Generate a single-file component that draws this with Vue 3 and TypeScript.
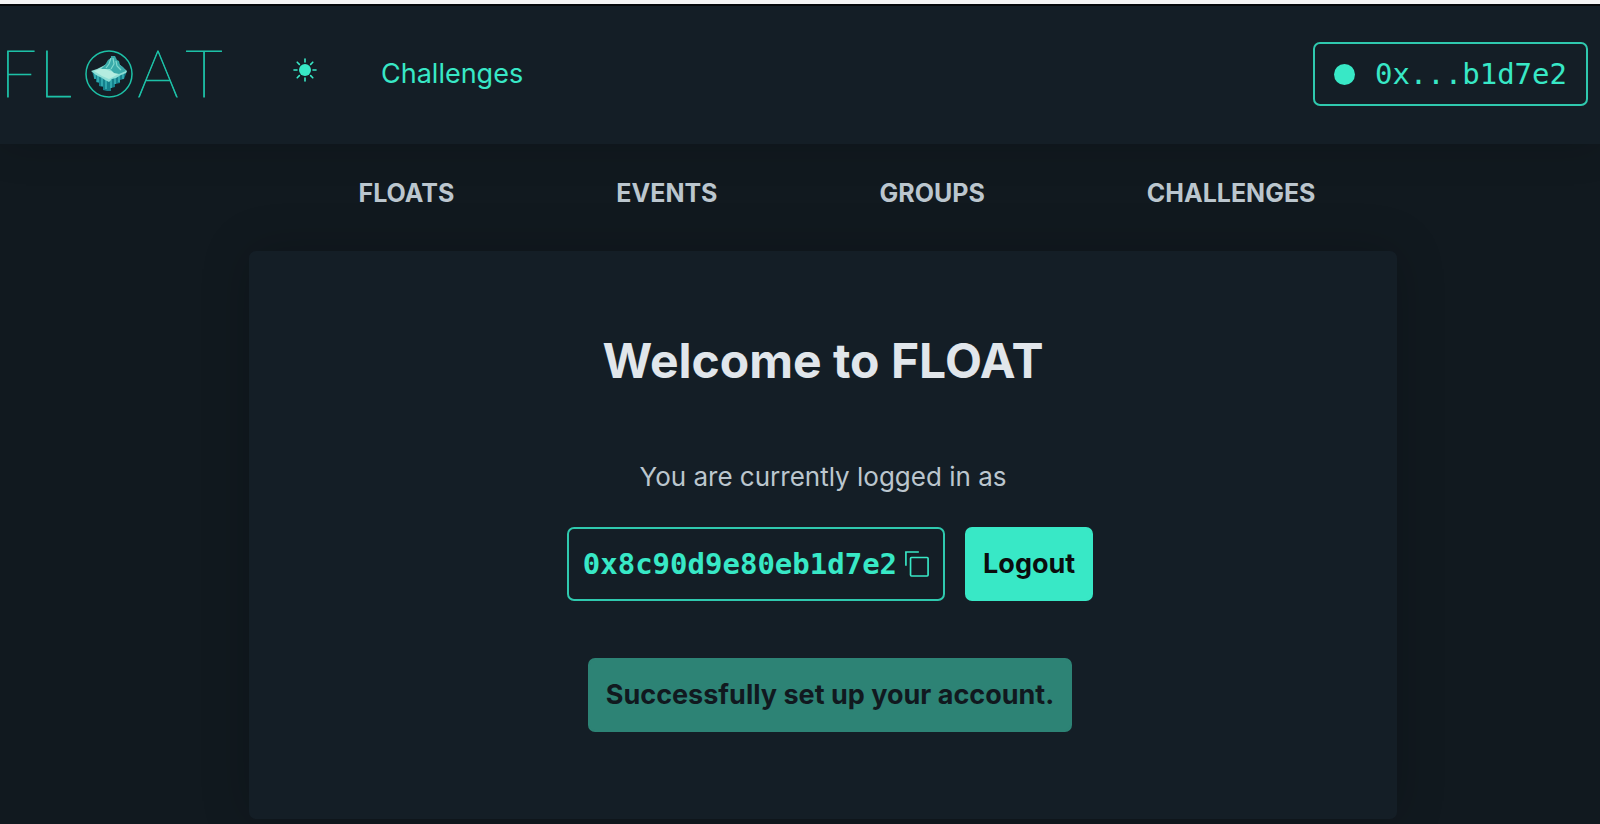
<script setup lang="ts">
import { ref } from 'vue'

const address = '0x8c90d9e80eb1d7e2'
const shortAddress = `${address.slice(0, 2)}...${address.slice(-6)}`
const tabs: string[] = ['FLOATS', 'EVENTS', 'GROUPS', 'CHALLENGES']
const rays: number[] = [0, 45, 90, 135, 180, 225, 270, 315]
const dark = ref(true)
</script>

<template>
  <div class="page">
    <header class="topbar">
      <div class="left">
        <a href="#" class="logo" aria-label="FLOAT">
          <svg viewBox="0 -16 240 84" width="240" height="84">
            <g class="letters">
              <text x="0" y="49">F</text>
              <text x="39" y="49">L</text>
              <text x="158" y="49" text-anchor="middle">A</text>
              <text x="204" y="49" text-anchor="middle">T</text>
            </g>
            <circle cx="109" cy="26" r="23" class="ring" />
            <path d="M92 23 94 30 96 31 96 34 99 35 99 38 103 39 103 42 107 43 111 43 111 40 115 39 115 36 120 35 120 32 124 31 127 23 109 30Z" fill="#15808c" />
            <path d="M95 25v6M98 27v7M102 30v8M106 32v9M111 32v8M115 29v7M119 28v6M123 26v5" stroke="#39b1b6" stroke-width="1.6" />
            <path d="M91 23 97 21 103 18 108 15 119 16 127 23 126 25 121 27 116 30 112 31 109 34 105 32 102 30 96 27Z" fill="#8edfd6" />
            <path d="M94 23 103 20 110 23 120 25 113 29 109 31 102 28Z" fill="#b4ede0" />
            <path d="M101 21 105 17 108 12 111 10 111 8 115 8 117 12 119 13 120 17 123 19 126 23 119 26 114 25 110 21Z" fill="#3aabaa" />
            <path d="M111 10 109 16 106 20M113 10 114 16 111 21M116 13 117 18 121 22" fill="none" stroke="#80d9ce" stroke-width="1.2" />
          </svg>
        </a>
        <button class="theme" type="button" aria-label="Toggle theme" @click="dark = !dark">
          <svg viewBox="0 0 24 24" width="24" height="24">
            <circle cx="12" cy="12" r="6" fill="currentColor" />
            <path v-for="r in rays" :key="r" d="M12 1v3" :transform="`rotate(${r} 12 12)`" stroke="currentColor" stroke-width="1.6" stroke-linecap="round" />
          </svg>
        </button>
        <a href="#" class="link">Challenges</a>
      </div>
      <button class="account" type="button"><span class="dot"></span>{{ shortAddress }}</button>
    </header>

    <nav class="tabs">
      <a v-for="tab in tabs" :key="tab" href="#">{{ tab }}</a>
    </nav>

    <main class="card">
      <h1>Welcome to FLOAT</h1>
      <p>You are currently logged in as</p>
      <div class="row">
        <button class="address" type="button">
          {{ address }}
          <svg viewBox="0 0 26 28" width="24" height="26" fill="none" stroke="currentColor" stroke-width="1.8">
            <path d="M1 16V1H15" />
            <rect x="6" y="7" width="19" height="20" rx="1" />
          </svg>
        </button>
        <button class="logout" type="button">Logout</button>
      </div>
      <div class="row">
        <button class="done" type="button" disabled>Successfully set up your account.</button>
      </div>
    </main>
  </div>
</template>

<style>
body {
  background: #11191f;
}
</style>

<style scoped>
.page {
  min-height: 100vh;
  box-sizing: border-box;
  padding-bottom: 5px;
  border-top: 4px solid #f4f4f4;
  background: #11191f;
  color: #bbc6ce;
  font: 27px/42px Inter, "Liberation Sans", sans-serif;
  overflow: hidden;
}
a {
  color: inherit;
  text-decoration: none;
}
button {
  margin: 0;
  border: 2px solid #2fc9ae;
  border-radius: 7px;
  background: transparent;
  color: #38e8c6;
  font: inherit;
  white-space: nowrap;
}
.topbar {
  display: flex;
  align-items: center;
  justify-content: space-between;
  height: 136px;
  padding: 0 12px 2px 0;
  border-top: 2px solid #05080a;
  background: #141e26;
  color: #38e8c6;
  box-shadow: 0 0 40px rgba(0, 0, 0, 0.18);
}
.left {
  display: flex;
  align-items: center;
}
.logo svg,
.theme svg {
  display: block;
}
.letters {
  fill: #1dc1a7;
  stroke: #1dc1a7;
  stroke-width: 0.8;
  font-family: Lato, Inter, sans-serif;
  font-size: 65px;
  font-weight: 100;
}
.ring {
  fill: none;
  stroke: #1dc1a7;
  stroke-width: 1.5;
}
.theme {
  margin: 0 64px 8px 53px;
  padding: 0;
  border: 0;
}
.account {
  display: flex;
  align-items: center;
  gap: 20px;
  padding: 9px 19px;
  font-family: "DejaVu Sans Mono", monospace;
  font-size: 29px;
}
.dot {
  width: 21px;
  height: 21px;
  border-radius: 50%;
  background: #38e8c6;
}
.tabs {
  display: flex;
  justify-content: center;
  gap: 162px;
  margin: 28px 0 37px 74px;
  font-size: 25px;
  font-weight: 700;
}
.card {
  box-sizing: border-box;
  margin: 0 203px 0 249px;
  padding: 79px 40px 87px;
  border-radius: 7px;
  background: #141e26;
  box-shadow: 0 0 50px rgba(0, 0, 0, 0.2);
  text-align: center;
}
h1 {
  margin: 0 0 64px;
  color: #e1e6eb;
  font-size: 48px;
  line-height: 62px;
  font-weight: 700;
}
p {
  margin: 0 0 29px;
  font-size: 26px;
}
.row {
  display: flex;
  justify-content: center;
  gap: 20px;
  margin-left: 14px;
}
.row + .row {
  margin-top: 57px;
}
.row button {
  padding: 14px 16px;
  font-weight: 700;
}
.row .address {
  display: flex;
  align-items: center;
  gap: 8px;
  padding: 14px;
  font-family: "DejaVu Sans Mono", monospace;
  font-size: 29px;
}
.row .logout {
  border-color: #38e8c6;
  background: #38e8c6;
  color: #0b0d0e;
}
.row .done {
  border-color: #2d8375;
  background: #2d8375;
  color: #11191f;
}
</style>
